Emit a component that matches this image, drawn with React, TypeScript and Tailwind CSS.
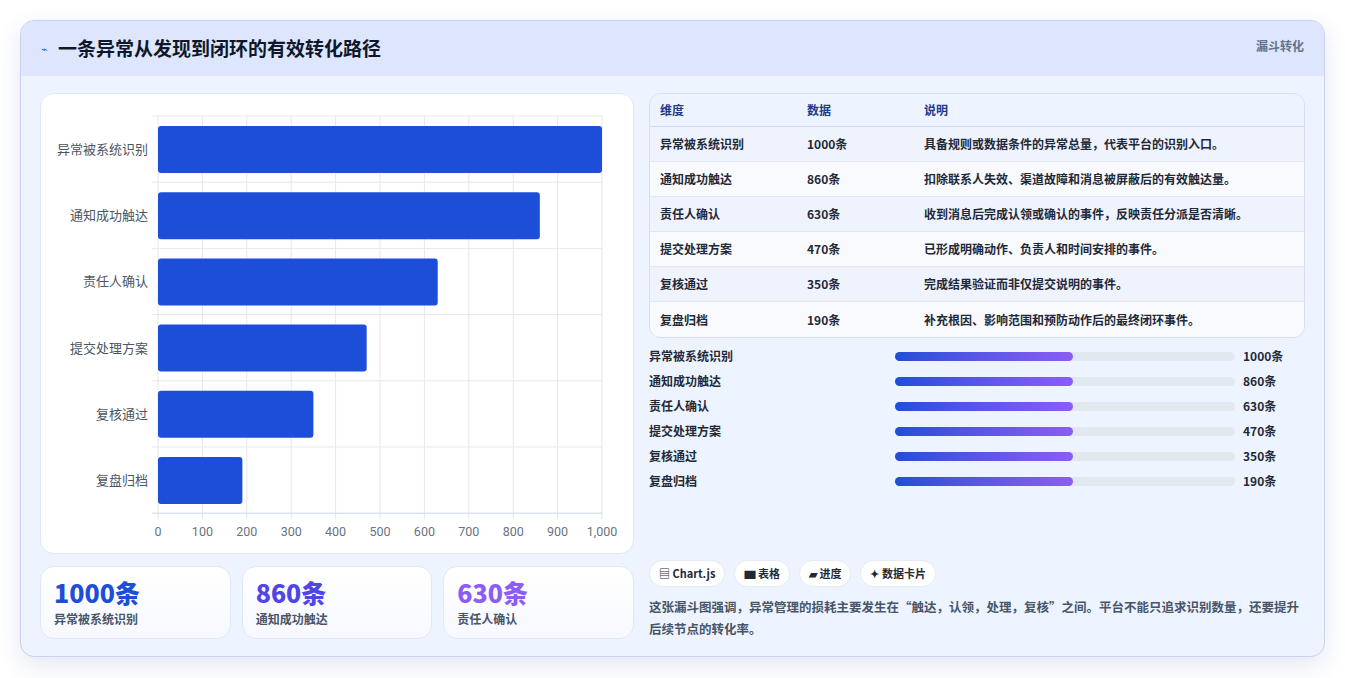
import React from "react";

const rows = [
  { n: "异常被系统识别", v: 1000, d: "具备规则或数据条件的异常总量，代表平台的识别入口。" },
  { n: "通知成功触达", v: 860, d: "扣除联系人失效、渠道故障和消息被屏蔽后的有效触达量。" },
  { n: "责任人确认", v: 630, d: "收到消息后完成认领或确认的事件，反映责任分派是否清晰。" },
  { n: "提交处理方案", v: 470, d: "已形成明确动作、负责人和时间安排的事件。" },
  { n: "复核通过", v: 350, d: "完成结果验证而非仅提交说明的事件。" },
  { n: "复盘归档", v: 190, d: "补充根因、影响范围和预防动作后的最终闭环事件。" },
];

const font = { fontFamily: '"Noto Sans CJK SC", "Noto Sans", sans-serif' };

function Chart() {
  const x0 = 117, w = 444, y0 = 22, rh = 66.2;
  return (
    <svg width="593" height="460" className="block">
      {Array.from({ length: 11 }).map((_, i) => (
        <g key={i}>
          <line x1={x0 + i * w / 10} x2={x0 + i * w / 10} y1={y0} y2={y0 + rh * 6 + 6} stroke="#e5e7eb" />
          <text x={x0 + i * w / 10} y={y0 + rh * 6 + 23} fontSize="12.5" fill="#6b7280" textAnchor="middle" fontFamily="Roboto, sans-serif">{i === 10 ? "1,000" : i * 100}</text>
        </g>
      ))}
      {Array.from({ length: 7 }).map((_, i) => (
        <line key={i} x1={x0 - 6} x2={x0 + w} y1={y0 + i * rh} y2={y0 + i * rh} stroke={i === 6 ? "#cbd5e1" : "#e5e7eb"} />
      ))}
      {rows.map((r, i) => (
        <g key={r.n}>
          <rect x={x0} y={y0 + i * rh + 10} width={(r.v / 1000) * w} height={47} rx="3" fill="#1d4ed8" />
          <text x={x0 - 10} y={y0 + i * rh + 38} fontSize="13" fill="#4b5563" textAnchor="end" fontFamily='"Noto Sans CJK SC", sans-serif'>{r.n}</text>
        </g>
      ))}
    </svg>
  );
}

export default function App() {
  return (
    <div className="w-[1345px] h-[678px] bg-white pt-[20px] px-[20px]" style={font}>
      <div className="h-[637px] rounded-[14px] border border-[#c7d2f0] bg-[#eef4ff] shadow-[0_8px_24px_rgba(30,64,175,0.12)] overflow-hidden flex flex-col">
        <div className="h-[55px] bg-[#dde6fd] flex items-center justify-between px-[20px] shrink-0">
          <div className="flex items-center gap-[10px]">
            <span className="text-[#2563eb] text-[11px]">⌁</span>
            <span className="text-[19px] font-bold text-[#0f172a]">一条异常从发现到闭环的有效转化路径</span>
          </div>
          <span className="text-[12px] font-bold text-[#64748b] self-start mt-[16px]">漏斗转化</span>
        </div>
        <div className="flex gap-[15px] px-[19px] pt-[17px]">
          <div className="w-[594px] flex flex-col gap-[12px]">
            <div className="h-[461px] bg-white rounded-[14px] border border-[#e0e7f5] overflow-hidden">
              <Chart />
            </div>
            <div className="grid grid-cols-3 gap-[11px]">
              {[["1000条", "text-[#1d4ed8]", "异常被系统识别"], ["860条", "text-[#4f46e5]", "通知成功触达"], ["630条", "text-[#8b5cf6]", "责任人确认"]].map(([a, c, b]) => (
                <div key={a} className="h-[73px] bg-gradient-to-b from-white to-[#f7f9ff] rounded-[14px] border border-[#e0e7f5] px-[13px] pt-[9px]">
                  <div className={`text-[25px] font-extrabold leading-[32px] ${c}`}>{a}</div>
                  <div className="text-[12px] font-semibold text-[#475569] mt-[2px]">{b}</div>
                </div>
              ))}
            </div>
          </div>
          <div className="w-[658px] flex flex-col">
            <div className="rounded-[12px] border border-[#d6def0] overflow-hidden text-[12px]">
              <div className="flex h-[33px] items-center bg-[#eef4ff] border-b border-[#cfd8ea] font-bold text-[#1e3a8a]">
                <div className="w-[157px] pl-[10px]">维度</div>
                <div className="w-[117px]">数据</div>
                <div>说明</div>
              </div>
              {rows.map((r, i) => (
                <div key={r.n} className={`flex h-[35px] items-center font-semibold text-[#1f2937] ${i % 2 === 0 ? "bg-[#eef3fe]" : "bg-[#f8fafd]"} ${i < 5 ? "border-b border-[#e2e8f0]" : ""}`}>
                  <div className="w-[157px] pl-[10px]">{r.n}</div>
                  <div className="w-[117px]">{r.v}条</div>
                  <div>{r.d}</div>
                </div>
              ))}
            </div>
            <div className="mt-[9px] flex flex-col gap-[7px]">
              {rows.map((r) => (
                <div key={r.n} className="flex items-center h-[18px] text-[12px] font-semibold text-[#1f2937]">
                  <div className="w-[246px]">{r.n}</div>
                  <div className="w-[340px] h-[9px] rounded-full bg-[#e2e8f0]">
                    <div className="w-[178px] h-full rounded-full bg-gradient-to-r from-[#1d4ed8] to-[#8b5cf6]" />
                  </div>
                  <div className="ml-[8px] font-bold">{r.v}条</div>
                </div>
              ))}
            </div>
            <div className="flex gap-[9px] mt-[70px] text-[11px] font-bold text-[#1f2937]">
              {["▤ Chart.js", "▆ 表格", "▰ 进度", "✦ 数据卡片"].map((t) => (
                <div key={t} className="h-[27px] px-[9px] flex items-center rounded-full bg-white border border-[#e5eaf3]">{t}</div>
              ))}
            </div>
            <p className="mt-[9px] text-[12.5px] leading-[22px] font-semibold text-[#475569]">
              这张漏斗图强调，异常管理的损耗主要发生在“触达，认领，处理，复核”之间。平台不能只追求识别数量，还要提升后续节点的转化率。
            </p>
          </div>
        </div>
      </div>
    </div>
  );
}
